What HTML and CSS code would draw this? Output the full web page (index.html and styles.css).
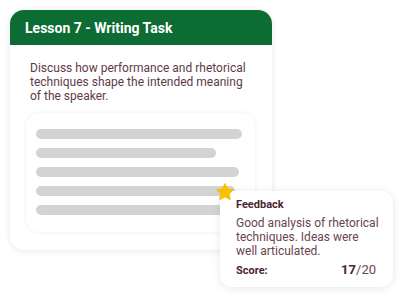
FILE: index.html
```html
<!DOCTYPE html>
<html>
<head>
<meta charset="utf-8">
<link rel="stylesheet" href="styles.css">
</head>
<body>
<div class="stage">
  <div class="card">
    <div class="card-head">Lesson 7 - Writing Task</div>
    <div class="card-body">
      <p class="prompt">Discuss how performance and rhetorical techniques shape the intended meaning of the speaker.</p>
      <div class="answer">
        <div class="bar" style="width:206px"></div>
        <div class="bar" style="width:180px"></div>
        <div class="bar" style="width:203px"></div>
        <div class="bar" style="width:199px"></div>
        <div class="bar" style="width:200px"></div>
      </div>
    </div>
  </div>
  <div class="feedback">
    <svg class="star" viewBox="0 0 24 24" width="20" height="20"><path d="M12 1.8l3.1 6.5 7.1.9-5.2 4.9 1.3 7.1L12 17.8l-6.3 3.4 1.3-7.1-5.2-4.9 7.1-.9z" fill="#f6c200" stroke="#f6c200" stroke-width="1.2" stroke-linejoin="round"/></svg>
    <div class="fb-title">Feedback</div>
    <p class="fb-text">Good analysis of rhetorical techniques. Ideas were well articulated.</p>
    <div class="fb-score"><span class="score-label">Score:</span><span class="score-val"><b>17</b>/20</span></div>
  </div>
</div>
</body>
</html>
```
FILE: styles.css
```css
* { box-sizing: border-box; }
html, body { margin: 0; padding: 0; background: #ffffff; }
body { font-family: Roboto, "Noto Sans", "Liberation Sans", sans-serif; width: 400px; height: 300px; overflow: hidden; }
.stage { position: relative; padding: 10px; width: 400px; height: 300px; }
.card {
  width: 262px; height: 240px;
  background: #fff; border-radius: 14px;
  box-shadow: 0 0 6px rgba(0,0,0,0.07), 0 2px 8px rgba(0,0,0,0.04);
  overflow: hidden;
}
.card-head {
  height: 35px; background: #0d6b34; color: #fff;
  font-weight: 700; font-size: 14px; line-height: 36px;
  padding-left: 15px;
}
.card-body { padding: 16px 17px 18px 16px; }
.prompt {
  margin: 0 0 10px 4px; font-size: 12px; line-height: 14px; color: #5e3b48;
}
.answer {
  border-radius: 14px; background: #fff;
  box-shadow: 0 0 4px rgba(0,0,0,0.07);
  padding: 16px 10px 17px 10px;
  display: flex; flex-direction: column; gap: 9px;
  height: 119px;
}
.bar { height: 10px; border-radius: 5px; background: #d1d3d4; }
.feedback {
  position: absolute; left: 220px; top: 191px; width: 173px; height: 96px;
  background: #fff; border-radius: 12px;
  box-shadow: 0 1px 8px rgba(0,0,0,0.10);
  padding: 7px 10px 10px 16px;
}
.star { position: absolute; left: -5px; top: -9px; }
.fb-title { font-size: 11px; font-weight: 700; line-height: 14px; color: #4a2532; }
.fb-text { margin: 4px 0 0; max-width: 144px; font-size: 12px; line-height: 14px; color: #6a4452; }
.fb-score { margin-top: 5px; margin-right: 7px; display: flex; justify-content: space-between; align-items: baseline; line-height: 14px; }
.score-label { font-size: 11px; font-weight: 700; color: #4a2532; }
.score-val { font-size: 13px; color: #6a4452; }
.score-val b { color: #4a2532; }
```
